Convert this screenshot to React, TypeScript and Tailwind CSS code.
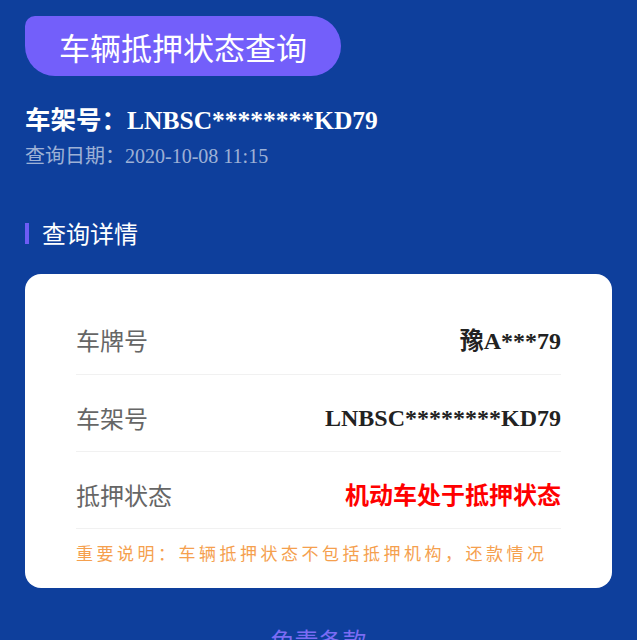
import React from "react";

const serif = "font-['Liberation_Serif','Noto_Sans_CJK_SC',serif]";
const sans = "font-['Noto_Sans_CJK_SC','Noto_Sans',sans-serif]";

function Row({ label, children }: { label: string; children: React.ReactNode }) {
  return (
    <div className="flex items-center justify-between pt-[29px] pb-[20px] border-b border-[#f1f1f1]">
      <span className={`${sans} text-[24px] leading-[26px] text-[#666666]`}>{label}</span>
      <span className="text-[24px] leading-[26px]">{children}</span>
    </div>
  );
}

export default function App() {
  return (
    <div className="min-h-[640px] w-full overflow-hidden bg-[#0e3f9c] px-[25px] pt-4">
      <div className={`flex h-[60px] w-[316px] items-center justify-center rounded-[30px] rounded-tl-[10px] bg-[#735ffa] ${sans} text-[31px] font-normal leading-none text-white`}>
        车辆抵押状态查询
      </div>

      <div className={`mt-[26px] ${serif} text-[25.5px] font-bold leading-[32px] text-white`}>
        <span className={sans}>车架号：</span>LNBSC********KD79
      </div>
      <div className={`mt-[4px] ${serif} text-[20px] leading-[28px] text-white/60`}>
        <span className={sans}>查询日期：</span>2020-10-08 11:15
      </div>

      <div className="mt-[48px] flex h-[30px] items-center">
        <div className="h-[21px] w-[4px] bg-[#6d5cf5]" />
        <span className={`ml-[13px] ${sans} text-[24px] leading-[30px] text-white`}>查询详情</span>
      </div>

      <div className="mt-[26px] rounded-[16px] bg-white px-[51px] pt-[23px] pb-[23px]">
        <Row label="车牌号">
          <span className={`${serif} font-bold text-[#222222]`}>
            <span className={sans}>豫</span>A***79
          </span>
        </Row>
        <Row label="车架号">
          <span className={`${serif} font-bold text-[#222222]`}>LNBSC********KD79</span>
        </Row>
        <Row label="抵押状态">
          <span className={`${sans} font-bold text-[#ff0000]`}>机动车处于抵押状态</span>
        </Row>
        <div className={`mt-[12px] ${sans} text-[17px] leading-[24px] tracking-[3.5px] text-[#f5a04e] whitespace-nowrap`}>
          重要说明：车辆抵押状态不包括抵押机构，还款情况
        </div>
      </div>

      <div className={`mt-[36px] text-center ${sans} text-[24px] leading-[32px] text-[#7b6cf4]`}>免责条款</div>
    </div>
  );
}
